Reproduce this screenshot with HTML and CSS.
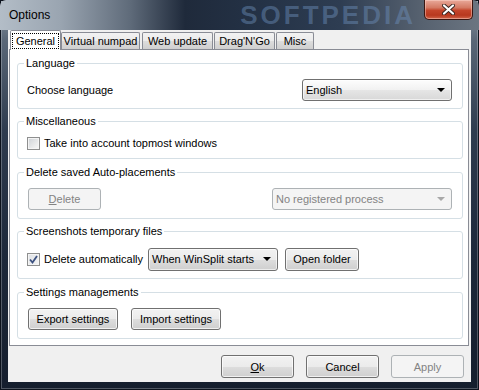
FILE: index.html
```html
<!DOCTYPE html>
<html>
<head>
    <meta charset="utf-8">
    <link rel="stylesheet" href="styles.css">
</head>
<body>
    <div class="window">
        <div class="titlebar">
            <span class="title">Options</span>
            <span class="watermark">SOFTPEDIA</span>
            <button class="close">
                <svg width="13" height="11" viewBox="0 0 13 11"><path d="M2 1.5 L11 9.5 M11 1.5 L2 9.5" stroke="#3a2520" stroke-width="4" stroke-linecap="round"/><path d="M2 1.5 L11 9.5 M11 1.5 L2 9.5" stroke="#fff" stroke-width="2.2" stroke-linecap="round"/></svg>
            </button>
        </div>

        <div class="client">
            <div class="tabs">
                <div class="tab active"><span class="focus">General</span></div>
                <div class="tab t-numpad">Virtual numpad</div>
                <div class="tab t-web">Web update</div>
                <div class="tab t-drag">Drag'N'Go</div>
                <div class="tab t-misc">Misc</div>
            </div>

            <div class="panel">
                <fieldset class="group g-lang">
                    <legend>Language</legend>
                    <div class="row spread">
                        <span>Choose language</span>
                        <div class="combo w-lang"><span>English</span><i class="arrow"></i></div>
                    </div>
                </fieldset>

                <fieldset class="group g-misc">
                    <legend>Miscellaneous</legend>
                    <div class="row">
                        <label class="check-label"><span class="check"></span>Take into account topmost windows</label>
                    </div>
                </fieldset>

                <fieldset class="group g-delete">
                    <legend>Delete saved Auto-placements</legend>
                    <div class="row spread">
                        <button class="btn disabled w-delete"><u>D</u>elete</button>
                        <div class="combo disabled w-process"><span>No registered process</span><i class="arrow"></i></div>
                    </div>
                </fieldset>

                <fieldset class="group g-shots">
                    <legend>Screenshots temporary files</legend>
                    <div class="row">
                        <label class="check-label w-auto"><span class="check checked"><svg width="9" height="9" viewBox="0 0 9 9"><path d="M1 4.5 L3.5 7.5 L8 1" fill="none" stroke="#3c5180" stroke-width="1.8"/></svg></span>Delete automatically</label>
                        <div class="combo w-when"><span>When WinSplit starts</span><i class="arrow"></i></div>
                        <button class="btn w-open">Open folder</button>
                    </div>
                </fieldset>

                <fieldset class="group g-settings">
                    <legend>Settings managements</legend>
                    <div class="row gap">
                        <button class="btn w-settings">Export settings</button>
                        <button class="btn w-settings">Import settings</button>
                    </div>
                </fieldset>
            </div>

            <div class="footer">
                <button class="btn w-dialog"><u>O</u>k</button>
                <button class="btn w-dialog">Cancel</button>
                <button class="btn disabled w-dialog">Apply</button>
            </div>
        </div>
    </div>
</body>
</html>
```

FILE: styles.css
```css
* {
    box-sizing: border-box;
    margin: 0;
    padding: 0;
}

body {
    background-color: #1b2536;
    font-family: "Liberation Sans", Arial, sans-serif;
    font-size: 11px;
    color: #000;
}

button {
    font: inherit;
    color: inherit;
}

.window {
    width: 479px;
    height: 390px;
    padding: 0 8px 8px;
    display: flex;
    flex-direction: column;
    background: linear-gradient(to bottom, #8f9aa6 0, #5a6777 40px, #2f3c4f 130px, #1d283a 260px, #151e2d 390px);
    box-shadow: inset 0 0 0 1px #0c121c, inset 0 0 0 2px rgba(255, 255, 255, 0.25);
}

/* title bar */
.titlebar {
    height: 30px;
    margin: 0 -8px;
    padding: 0 6px 0 9px;
    display: flex;
    align-items: flex-start;
    background: linear-gradient(to right, #b3bdc7 0, #9aa5b1 60px, #5f6b7a 130px, #1f2a3b 185px, #243246 260px, #2e3d52 340px, #56616f 420px, #6b7581 479px);
    border-radius: 6px 6px 0 0;
}

.title {
    padding-top: 8px;
    font-size: 12px;
    color: #000;
}

.watermark {
    flex-shrink: 0;
    margin-left: auto;
    margin-right: 8px;
    padding-top: 1px;
    font-size: 26px;
    font-weight: bold;
    letter-spacing: 3px;
    line-height: 28px;
    color: rgba(110, 145, 190, 0.45);
}

.close {
    width: 49px;
    height: 20px;
    border: 1px solid #3b1611;
    border-top: none;
    border-radius: 0 0 5px 5px;
    background: linear-gradient(to bottom, #e9a99a 0%, #d47a64 40%, #c4452b 55%, #b8381f 80%, #d0654a 100%);
    box-shadow: inset 0 0 0 1px rgba(255, 220, 210, 0.45);
    display: flex;
    align-items: center;
    justify-content: center;
}

/* client area */
.client {
    flex: 1;
    display: flex;
    flex-direction: column;
    padding: 0 2px 0 1px;
    background-color: #f0f0f0;
}

.tabs {
    height: 19px;
    display: flex;
    align-items: flex-end;
    padding-left: 1px;
}

.tab {
    height: 17px;
    display: flex;
    align-items: center;
    justify-content: center;
    border: 1px solid #898c95;
    border-bottom: none;
    border-radius: 2px 2px 0 0;
    background: linear-gradient(to bottom, #f2f2f2 0%, #ebebeb 50%, #dddddd 51%, #cfcfcf 100%);
}

.tab.active {
    width: 51px;
    height: 20px;
    margin-bottom: -1px;
    position: relative;
    z-index: 1;
    background: #fff;
}

.focus {
    padding: 1px 3px;
    outline: 1px dotted #000;
}

.t-numpad { width: 79px; }
.t-web { width: 71px; margin-left: 2px; }
.t-drag { width: 61px; margin-left: 1px; }
.t-misc { width: 38px; margin-left: 1px; }

.panel {
    height: 297px;
    padding: 6px 5px 0 7px;
    display: flex;
    flex-direction: column;
    gap: 5px;
    border: 1px solid #898c95;
    background-color: #fff;
}

/* group boxes */
.group {
    border: 1px solid #d5dfe5;
    border-radius: 3px;
    padding: 9px 10px 7px 9px;
}

.group legend {
    margin-left: -3px;
    padding: 0 2px;
    line-height: 14px;
}

.g-misc { padding-top: 4px; padding-bottom: 4px; }
.g-delete { margin-top: 1px; padding-bottom: 8px; }
.g-shots { padding-top: 10px; padding-bottom: 8px; }
.g-settings { margin-top: 1px; padding-bottom: 8px; }

.row {
    height: 22px;
    display: flex;
    align-items: center;
}

.row.spread {
    justify-content: space-between;
}

.row.gap {
    gap: 13px;
}

.check-label {
    display: flex;
    align-items: center;
    gap: 4px;
}

.check {
    width: 13px;
    height: 13px;
    display: flex;
    align-items: center;
    justify-content: center;
    border: 1px solid #8e8f8f;
    background: linear-gradient(135deg, #cdd1d6 0%, #e8e9ea 60%, #f8f8f8 100%);
    box-shadow: inset 0 0 0 1px #f4f4f4;
}

.check.checked {
    background: linear-gradient(135deg, #dfe2e6 0%, #f4f4f4 100%);
}

.w-auto { width: 121px; }

/* combo boxes and buttons */
.combo {
    height: 22px;
    display: flex;
    align-items: center;
    justify-content: space-between;
    padding: 0 6px 0 3px;
    border: 1px solid #707070;
    border-radius: 3px;
    background: linear-gradient(to bottom, #f2f2f2 0%, #ebebeb 50%, #dddddd 51%, #cfcfcf 100%);
    box-shadow: inset 0 0 0 1px rgba(255, 255, 255, 0.6);
}

.w-lang {
    width: 150px;
    background: linear-gradient(to bottom, #fdfdfd 0%, #f1f1f1 50%, #e6e6e6 51%, #d8d8d8 100%);
}

.w-process { width: 180px; }
.w-when { width: 130px; height: 23px; }

.arrow {
    width: 0;
    height: 0;
    border-left: 4px solid transparent;
    border-right: 4px solid transparent;
    border-top: 4px solid #000;
}

.btn {
    height: 22px;
    border: 1px solid #707070;
    border-radius: 3px;
    background: linear-gradient(to bottom, #f2f2f2 0%, #ebebeb 50%, #dddddd 51%, #cfcfcf 100%);
    box-shadow: inset 0 0 0 1px rgba(255, 255, 255, 0.7);
    cursor: pointer;
}

.btn.disabled,
.combo.disabled {
    border-color: #adb2b5;
    background: #f4f4f4;
    box-shadow: none;
    color: #838383;
}

.combo.disabled .arrow {
    border-top-color: #a8a8a8;
}

.w-delete { width: 73px; margin-left: 1px; }
.w-open { width: 74px; height: 23px; margin-left: 7px; }
.w-settings { width: 90px; margin-left: 1px; }
.w-settings + .w-settings { margin-left: 0; }

.footer {
    display: flex;
    justify-content: flex-end;
    gap: 12px;
    padding: 9px 5px 0 0;
}

.w-dialog {
    width: 73px;
    height: 23px;
}
```
